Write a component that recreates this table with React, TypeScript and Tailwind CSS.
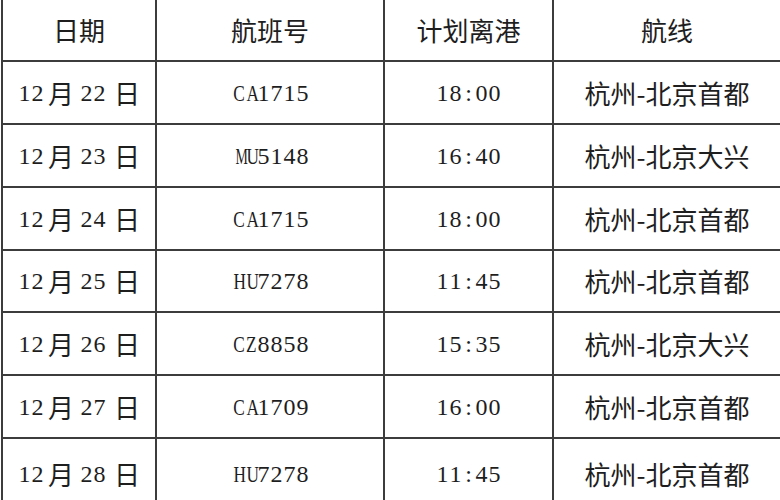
import React from "react";

type Row = { d: string; f: string; t: string; r: string };

const rows: Row[] = [
  { d: "22", f: "CA1715", t: "18:00", r: "首都" },
  { d: "23", f: "MU5148", t: "16:40", r: "大兴" },
  { d: "24", f: "CA1715", t: "18:00", r: "首都" },
  { d: "25", f: "HU7278", t: "11:45", r: "首都" },
  { d: "26", f: "CZ8858", t: "15:35", r: "大兴" },
  { d: "27", f: "CA1709", t: "16:00", r: "首都" },
  { d: "28", f: "HU7278", t: "11:45", r: "首都" },
];

const heights = ["h-[63px]", "h-[63px]", "h-[63px]", "h-[62px]", "h-[63px]", "h-[63px]", "h-[62px]"];

const cjk = "font-['Noto_Sans_CJK_SC',sans-serif] text-[26px] leading-none";

function Mono({ s }: { s: string }) {
  return (
    <span className="inline-flex font-['Liberation_Serif',serif] text-[24px] leading-none">
      {s.split("").map((ch, i) => {
        const isLetter = /[A-Z]/.test(ch);
        return (
          <span key={i} className="inline-block w-[13px] text-center">
            {isLetter ? (
              <span className={`inline-block ${ch === "M" ? "scale-x-[0.58]" : "scale-x-[0.72]"}`}>{ch}</span>
            ) : (
              ch
            )}
          </span>
        );
      })}
    </span>
  );
}

function Cells({ children }: { children: React.ReactNode[] }) {
  const widths = ["w-[154px]", "w-[228px]", "w-[169px]", "flex-1"];
  return (
    <>
      {children.map((c, i) => (
        <div
          key={i}
          className={`${widths[i]} h-full border-l-2 border-[#3c3c3c] flex items-center justify-center`}
        >
          {c}
        </div>
      ))}
    </>
  );
}

export default function App() {
  return (
    <div className="w-[780px] h-[500px] overflow-hidden bg-white pl-[1px] text-[#1e1e1e]">
      <div className="flex h-[62px] border-b-2 border-[#3c3c3c]">
        <Cells>
          {[
            <span key="a" className={cjk}>日期</span>,
            <span key="b" className={cjk}>航班号</span>,
            <span key="c" className={cjk}>计划离港</span>,
            <span key="d" className={cjk}>航线</span>,
          ]}
        </Cells>
      </div>
      {rows.map((row, i) => (
        <div
          key={i}
          className={`flex ${i < rows.length - 1 ? `${heights[i]} border-b-2 border-[#3c3c3c]` : "h-[70px]"}`}
        >
          <Cells>
            {[
              <span key="a" className="flex items-center">
                <Mono s="12" />
                <span className={`${cjk} ml-[4px]`}>月</span>
                <span className="ml-[6px] flex">
                  <Mono s={row.d} />
                </span>
                <span className={`${cjk} ml-[8px]`}>日</span>
              </span>,
              <Mono key="b" s={row.f} />,
              <Mono key="c" s={row.t} />,
              <span key="d" className={cjk}>杭州-北京{row.r}</span>,
            ]}
          </Cells>
        </div>
      ))}
    </div>
  );
}
